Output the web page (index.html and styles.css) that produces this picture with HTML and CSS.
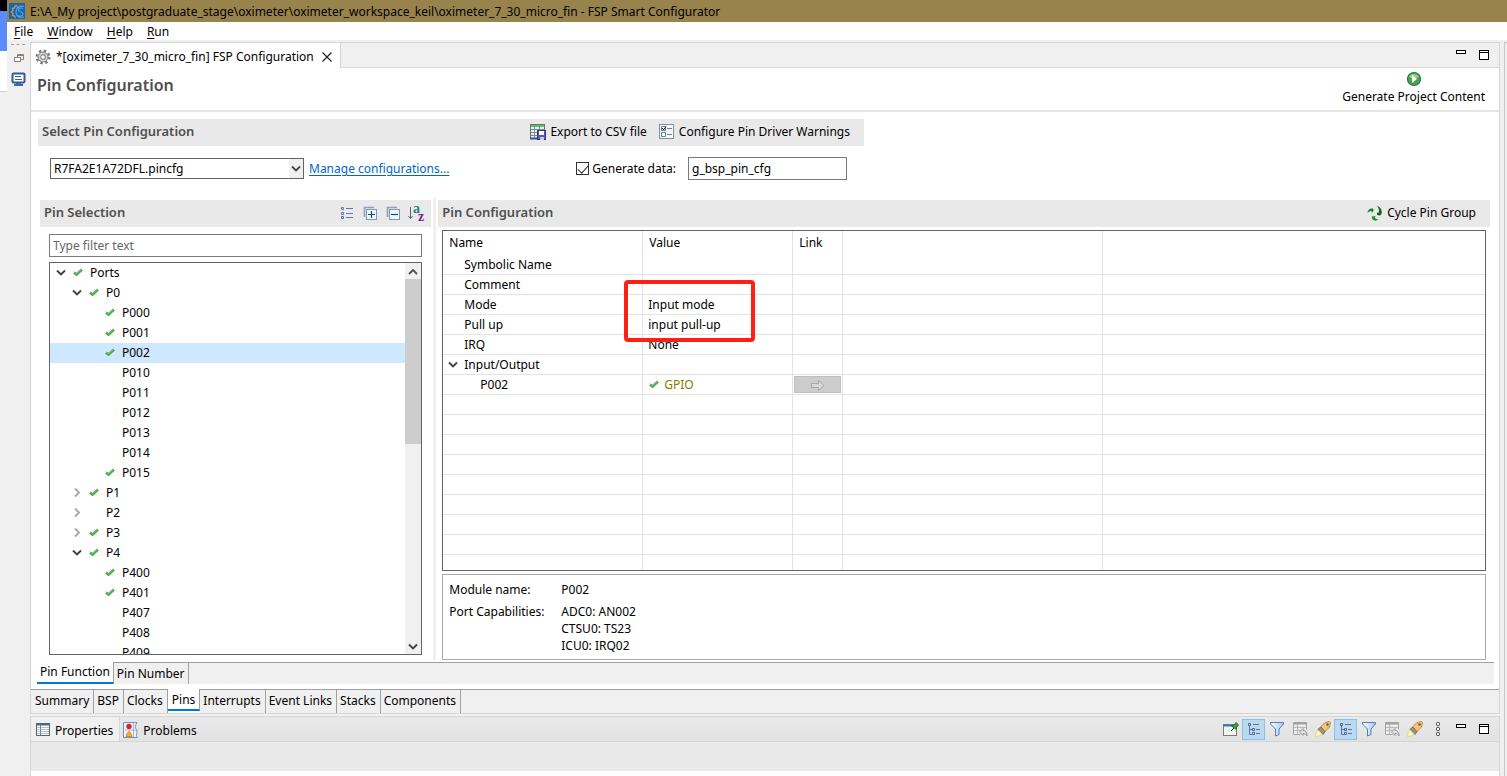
FILE: index.html
```html
<!DOCTYPE html>
<html lang="en">
<head>
  <meta charset="UTF-8">
  <meta name="viewport" content="width=device-width, initial-scale=1.0">
  <title>FSP Smart Configurator</title>
  <link rel="stylesheet" href="styles.css">
</head>
<body>
  <!-- Shared icons -->
  <svg class="sprite" aria-hidden="true">
    <linearGradient id="funnelFill" x1="0" y1="0" x2="1" y2="0">
      <stop offset="0" stop-color="#fff"/><stop offset="1" stop-color="#9cc8ee"/>
    </linearGradient>
    <symbol id="check" viewBox="0 0 16 16">
      <path d="M4 8.500 6.500 10.500 12 5.500" fill="none" stroke="#4a9e4c" stroke-width="2.600"/>
      <path d="M4.500 8.300 6.500 9.800 11.500 5.500" fill="none" stroke="#8bcf86" stroke-width="1"/>
    </symbol>
    <symbol id="open" viewBox="0 0 16 16">
      <path d="M4 6.500 8 10.500 12 6.500" fill="none" stroke="#404040" stroke-width="1.800"/>
    </symbol>
    <symbol id="closed" viewBox="0 0 16 16">
      <path d="M6 4.500 10 8.500 6 12.500" fill="none" stroke="#a6a6a6" stroke-width="1.800"/>
    </symbol>
    <symbol id="minimize" viewBox="0 0 16 16">
      <rect x="3.500" y="3.500" width="9" height="3" fill="#fff" stroke="#000"/>
    </symbol>
    <symbol id="maximize" viewBox="0 0 16 16">
      <rect x="3.500" y="3.500" width="9" height="9" fill="#fff" stroke="#000"/>
      <path d="M3 5.500h10" stroke="#000"/>
    </symbol>
    <symbol id="treeview" viewBox="0 0 16 16">
      <path d="M3.500 4v9.500h3M3.500 8.500h3" fill="none" stroke="#5b74a8"/>
      <rect x="2.500" y="2.500" width="2" height="2" fill="#dfe9f8" stroke="#5b74a8"/>
      <rect x="6.500" y="7.500" width="2" height="2" fill="#dfe9f8" stroke="#5b74a8"/>
      <rect x="6.500" y="11.500" width="2" height="2" fill="#dfe9f8" stroke="#5b74a8"/>
      <path d="M7 3.500h6M10 8.500h4M10 12.500h4" stroke="#5b74a8"/>
    </symbol>
    <symbol id="funnel" viewBox="0 0 16 16">
      <path d="M1.500 1.500h13v1.500L10 8v5.500L6.500 15V8L1.500 3z" fill="url(#funnelFill)" stroke="#5a7db4"/>
    </symbol>
    <symbol id="restoreTable" viewBox="0 0 16 16">
      <path d="M1.500 1.500h13v7M1.500 1.500v12h7" fill="#ececec" stroke="#a3a3a3"/>
      <path d="M1 2.500h14" stroke="#a3a3a3" stroke-width="2"/>
      <path d="M2 6.500h12M2 9.500h7M5.500 3v10" fill="none" stroke="#b9b9b9"/>
      <path d="M7.500 11 11 7.500V9.500c3 0 4 2 4 5.500-1-2-2-2.500-4-2.500v2z" fill="#e4e4e4" stroke="#999"/>
    </symbol>
    <symbol id="torch" viewBox="0 0 16 16">
      <path d="M10 1.500 14.500 .5 15.500 1.500 14.500 6 8.500 12 4 7.500z" fill="#f7c56f" stroke="#c98b2b"/>
      <circle cx="12.500" cy="3.500" r="1.200" fill="#2f5f9e"/>
      <path d="M6 6 10 10.500 8 13.500 3 8.500z" fill="#9a928d" stroke="#7b736e"/>
      <path d="M3 9 7 13 4 15 .5 15.500 1 12z" fill="#fff7c9" stroke="#eecb55" stroke-width=".7"/>
    </symbol>
  </svg>

  <div class="desktop">
    <div class="behind">
      <span class="behind-black"></span>
      <span class="behind-blue"></span>
      <span class="behind-white"></span>
    </div>

    <div class="window">
      <header class="titlebar">
        <svg class="app-icon" viewBox="0 0 16 16">
          <rect width="16" height="16" fill="#1667b1"/>
          <path d="M8 2.500 6 3 5.500 5 3.500 5.500 4 7.500 2.500 9 4 10.500 3.500 12.500 5.500 13 6.500 15" fill="none" stroke="#c9964d" stroke-width="1.300"/>
          <path d="M8 3.500 10 5" stroke="#c9964d" stroke-width="1.300"/>
          <path d="M14 5.500c-2-1-4.500-.5-4.500 1.500 0 2.500 4.500 1.500 4.500 4 0 2-3 2.500-5 1.500M15 3.500C10 2 7 5 7 9s3 6.500 8 5" fill="none" stroke="#4fa3e8" stroke-width="1.200"/>
        </svg>
        <span>E:\A_My project\postgraduate_stage\oximeter\oximeter_workspace_keil\oximeter_7_30_micro_fin - FSP Smart Configurator</span>
      </header>

      <nav class="menubar">
        <button><u>F</u>ile</button>
        <button><u>W</u>indow</button>
        <button><u>H</u>elp</button>
        <button><u>R</u>un</button>
      </nav>

      <div class="workbench">
        <aside class="trim">
          <span class="grip"></span>
          <button aria-label="Restore">
            <svg class="icon" viewBox="0 0 16 16">
              <path d="M7.500 7V4.500h6v5H11M7.500 5.500h6" fill="none" stroke="#8a8178"/>
              <rect x="4.500" y="7.500" width="6" height="4" fill="#fff" stroke="#8a8178"/>
            </svg>
          </button>
          <button aria-label="Console">
            <svg class="icon" viewBox="0 0 16 16">
              <rect x="2.500" y="2.500" width="12" height="9" rx="1" fill="#fff" stroke="#2f5a9c" stroke-width="2"/>
              <path d="M5 5.500h6M5 8.500h7" stroke="#4a5f86"/>
              <path d="M6 12h5v1h2v2H4v-2h2z" fill="#3a67a8"/>
            </svg>
          </button>
        </aside>

        <main class="main">
          <section class="editor">
            <div class="editor-tabs">
              <div class="editor-tab">
                <svg class="icon" viewBox="0 0 16 16">
                  <circle cx="8" cy="8" r="6.200" fill="none" stroke="#7d7d7d" stroke-width="2.500" stroke-dasharray="2.400 2.470"/>
                  <circle cx="8" cy="8" r="5" fill="#d3d3d3" stroke="#858585"/>
                  <circle cx="8" cy="8" r="2.300" fill="#fff" stroke="#8c8c8c" stroke-width="1.200"/>
                </svg>
                <span>*[oximeter_7_30_micro_fin] FSP Configuration</span>
                <button class="close" aria-label="Close">
                  <svg class="icon" viewBox="0 0 16 16"><path d="M3.500 3.500l9 9M12.500 3.500l-9 9" stroke="#222" stroke-width="1.200"/></svg>
                </button>
              </div>
              <div class="tools">
                <button aria-label="Minimize"><svg class="icon"><use href="#minimize"/></svg></button>
                <button aria-label="Maximize"><svg class="icon"><use href="#maximize"/></svg></button>
              </div>
            </div>

            <div class="form-head">
              <h1>Pin Configuration</h1>
              <button class="generate">
                <svg class="icon" viewBox="0 0 16 16">
                  <circle cx="8" cy="8" r="6.500" fill="#4ba254" stroke="#1f7a45" stroke-width="1.200"/>
                  <path d="M3 6c2-4 8-4 10 0-3 1-6 2-10 0z" fill="#9bd27f"/>
                  <path d="M6 4v8l5-4z" fill="#fff"/>
                </svg>
                Generate Project Content
              </button>
            </div>

            <section class="select-config">
              <div class="bar">
                <h2>Select Pin Configuration</h2>
                <button class="text-button">
                  <svg class="icon" viewBox="0 0 16 16">
                    <rect x=".5" y=".5" width="14" height="14" fill="#e9f3ea" stroke="#69717c"/>
                    <path d="M1 2h13" stroke="#4fd04a" stroke-width="2"/>
                    <path d="M1 5.500h13M1 8.500h13M1 11.500h13M4.500 1v13M9.500 1v13" stroke="#7d8b93"/>
                    <path d="M0 14.500h7" stroke="#2d56a5" stroke-width="2"/>
                    <rect x="7.500" y="6.500" width="8" height="9" fill="#5b57b8" stroke="#37348c"/>
                    <path d="M9 7h5v4H9z" fill="#fff"/><path d="M10 13h4v3h-4z" fill="#c9c8ea"/>
                  </svg>
                  Export to CSV file
                </button>
                <button class="text-button">
                  <svg class="icon" viewBox="0 0 16 16">
                    <rect x=".5" y=".5" width="14" height="14" fill="#f5f9fc" stroke="#7893a8"/>
                    <path d="M2.500 2.500h4v4h-4zM2.500 8.500h4v4h-4z" fill="#fff" stroke="#64809a"/>
                    <path d="M3 4l1.500 2L7 2.500" fill="none" stroke="#222"/>
                    <path d="M8 4.500h5M8 10.500h5" stroke="#64809a"/>
                  </svg>
                  Configure Pin Driver Warnings
                </button>
              </div>
              <div class="config-row">
                <div class="combo">
                  <select aria-label="Pin configuration"><option>R7FA2E1A72DFL.pincfg</option></select>
                  <svg class="combo-arrow" viewBox="0 0 14 19"><path d="M3 7.500 7 11.500 11 7.500" fill="none" stroke="#444" stroke-width="1.800"/></svg>
                </div>
                <a href="#">Manage configurations...</a>
                <div class="generate-data">
                  <input type="checkbox" id="genData" checked>
                  <label for="genData">Generate data:</label>
                  <input type="text" class="field" aria-label="Data name" value="g_bsp_pin_cfg">
                </div>
              </div>
            </section>

            <div class="panes">
              <section class="selection">
                <div class="bar">
                  <h2>Pin Selection</h2>
                  <div class="tools">
                    <button aria-label="List view">
                      <svg class="icon" viewBox="0 0 16 16">
                        <path d="M2.500 2.500h2v2h-2zM2.500 7.500h2v2h-2zM2.500 11.500h2v2h-2z" fill="#cfdcf2" stroke="#6179ae"/>
                        <path d="M7 3.500h7M7 8.500h7M7 12.500h7" stroke="#6179ae"/>
                      </svg>
                    </button>
                    <button aria-label="Expand all">
                      <svg class="icon" viewBox="0 0 16 16">
                        <path d="M2.500 12V2.500H12" fill="none" stroke="#8ba0c4" stroke-width="1.600"/>
                        <rect x="4.500" y="4.500" width="10" height="10" fill="#f2f9ff" stroke="#7e97bf"/>
                        <path d="M6 9.500h7M9.500 6v7" stroke="#0c4a7c" stroke-width="1.200"/>
                      </svg>
                    </button>
                    <button aria-label="Collapse all">
                      <svg class="icon" viewBox="0 0 16 16">
                        <path d="M2.500 12V2.500H12" fill="none" stroke="#8ba0c4" stroke-width="1.600"/>
                        <rect x="4.500" y="4.500" width="10" height="10" fill="#f2f9ff" stroke="#7e97bf"/>
                        <path d="M6 9.500h7" stroke="#0c4a7c" stroke-width="1.200"/>
                      </svg>
                    </button>
                    <button aria-label="Sort">
                      <svg class="icon sort" viewBox="0 0 16 16">
                        <path d="M2.500 2v11M.5 11l2 2.500L4.500 11" fill="none" stroke="#5c6670"/>
                        <text x="5" y="8" fill="#23877d">a</text>
                        <text x="10" y="16" fill="#7c2485">z</text>
                      </svg>
                    </button>
                  </div>
                </div>

                <div class="selection-body">
                  <input type="text" class="field" placeholder="Type filter text" aria-label="Type filter text">
                  <div class="tree-box">
                    <ul class="tree">
                      <li><svg class="icon"><use href="#open"/></svg><svg class="icon"><use href="#check"/></svg>Ports</li>
                      <li class="port"><svg class="icon"><use href="#open"/></svg><svg class="icon"><use href="#check"/></svg>P0</li>
                      <li class="pin"><svg class="icon"><use href="#check"/></svg>P000</li>
                      <li class="pin"><svg class="icon"><use href="#check"/></svg>P001</li>
                      <li class="pin selected"><svg class="icon"><use href="#check"/></svg>P002</li>
                      <li class="pin"><svg class="icon"></svg>P010</li>
                      <li class="pin"><svg class="icon"></svg>P011</li>
                      <li class="pin"><svg class="icon"></svg>P012</li>
                      <li class="pin"><svg class="icon"></svg>P013</li>
                      <li class="pin"><svg class="icon"></svg>P014</li>
                      <li class="pin"><svg class="icon"><use href="#check"/></svg>P015</li>
                      <li class="port"><svg class="icon"><use href="#closed"/></svg><svg class="icon"><use href="#check"/></svg>P1</li>
                      <li class="port"><svg class="icon"><use href="#closed"/></svg><svg class="icon"></svg>P2</li>
                      <li class="port"><svg class="icon"><use href="#closed"/></svg><svg class="icon"><use href="#check"/></svg>P3</li>
                      <li class="port"><svg class="icon"><use href="#open"/></svg><svg class="icon"><use href="#check"/></svg>P4</li>
                      <li class="pin"><svg class="icon"><use href="#check"/></svg>P400</li>
                      <li class="pin"><svg class="icon"><use href="#check"/></svg>P401</li>
                      <li class="pin"><svg class="icon"></svg>P407</li>
                      <li class="pin"><svg class="icon"></svg>P408</li>
                      <li class="pin"><svg class="icon"></svg>P409</li>
                    </ul>
                    <div class="scrollbar">
                      <svg class="icon" viewBox="0 0 16 16"><path d="M4 11 8 7 12 11" fill="none" stroke="#505050" stroke-width="1.800"/></svg>
                      <div class="track"><div class="thumb"></div></div>
                      <svg class="icon"><use href="#open"/></svg>
                    </div>
                  </div>
                </div>
              </section>

              <div class="sash"></div>

              <section class="details">
                <div class="bar">
                  <h2>Pin Configuration</h2>
                  <button class="text-button">
                    <svg class="icon" viewBox="0 0 16 16">
                      <path d="M.5 8C.5 5 3 3 6 3.500L6.500 5.500 5 8 4.500 6C3 6 2 6.500 .5 8z" fill="#1c7a24"/>
                      <path d="M10 1c4 1 5.500 5 4.500 8L13 10.500 10 10V7.500l1.500.5C12.500 6 12 3 10 1z" fill="#14651b"/>
                      <path d="M12 14.500c-2.500 1.500-5 1.500-6.500 0L4.500 11.500l4-.5-.500 1.500c1 1.500 2 2 4 2z" fill="#2b8f35"/>
                    </svg>
                    Cycle Pin Group
                  </button>
                </div>

                <div class="details-body">
                  <div class="table-box">
                    <table>
                      <thead>
                        <tr><th class="col-name">Name</th><th class="col-value">Value</th><th class="col-link">Link</th><th class="col-extra"></th><th></th></tr>
                      </thead>
                      <tbody>
                        <tr><td>Symbolic Name</td><td></td><td></td><td></td><td></td></tr>
                        <tr><td>Comment</td><td></td><td></td><td></td><td></td></tr>
                        <tr><td>Mode</td><td>Input mode</td><td></td><td></td><td></td></tr>
                        <tr><td>Pull up</td><td>input pull-up</td><td></td><td></td><td></td></tr>
                        <tr><td>IRQ</td><td>None</td><td></td><td></td><td></td></tr>
                        <tr><td class="group"><svg class="icon"><use href="#open"/></svg>Input/Output</td><td></td><td></td><td></td><td></td></tr>
                        <tr>
                          <td class="child">P002</td>
                          <td class="gpio"><svg class="icon"><use href="#check"/></svg>GPIO</td>
                          <td class="link-cell">
                            <button class="link-button" aria-label="Go to link" disabled>
                              <svg class="icon" viewBox="0 0 16 16"><path d="M1.500 6.500h7v-3L14 8.500l-5.500 5v-3h-7z" fill="#d8d8d8" stroke="#a9a9a9"/></svg>
                            </button>
                          </td>
                          <td></td><td></td>
                        </tr>
                        <tr><td></td><td></td><td></td><td></td><td></td></tr>
                        <tr><td></td><td></td><td></td><td></td><td></td></tr>
                        <tr><td></td><td></td><td></td><td></td><td></td></tr>
                        <tr><td></td><td></td><td></td><td></td><td></td></tr>
                        <tr><td></td><td></td><td></td><td></td><td></td></tr>
                        <tr><td></td><td></td><td></td><td></td><td></td></tr>
                        <tr><td></td><td></td><td></td><td></td><td></td></tr>
                        <tr><td></td><td></td><td></td><td></td><td></td></tr>
                        <tr><td></td><td></td><td></td><td></td><td></td></tr>
                      </tbody>
                    </table>
                    <div class="highlight"></div>
                  </div>

                  <dl class="module">
                    <dt>Module name:</dt>
                    <dd>P002</dd>
                    <dt>Port Capabilities:</dt>
                    <dd>ADC0: AN002<br>CTSU0: TS23<br>ICU0: IRQ02</dd>
                  </dl>
                </div>
              </section>
            </div>

            <nav class="page-tabs inner">
              <button class="active">Pin Function</button>
              <button>Pin Number</button>
            </nav>
            <nav class="page-tabs outer">
              <button>Summary</button>
              <button>BSP</button>
              <button>Clocks</button>
              <button class="active">Pins</button>
              <button>Interrupts</button>
              <button>Event Links</button>
              <button>Stacks</button>
              <button>Components</button>
            </nav>
          </section>

          <section class="view">
            <div class="view-tabs">
              <button class="view-tab active">
                <svg class="icon" viewBox="0 0 16 16">
                  <rect x="1.500" y="1.500" width="13" height="12" fill="#fff" stroke="#4f6787"/>
                  <path d="M1 2.500h14" stroke="#4f6787" stroke-width="2"/>
                  <path d="M2 5.500h12M2 7.500h12M2 9.500h12M2 11.500h12" stroke="#b9c4d3"/>
                  <path d="M5.500 3v10" stroke="#6f87a6"/>
                </svg>
                Properties
              </button>
              <button class="view-tab">
                <svg class="icon" viewBox="0 0 16 16">
                  <path d="M.5.5H14c-2 3-2 5-.5 7.500S12 13 14.500 15.500H.5z" fill="#eef3fb" stroke="#7d8fae"/>
                  <path d="M10.500 1v14M2 8h11" stroke="#a9b7cd"/>
                  <circle cx="6" cy="4.500" r="2.700" fill="#d8232e"/>
                  <path d="M6 9.500c2 1 2 3 3 5H3c1-2 1-4 3-5z" fill="#f2b12e" stroke="#d68a10"/>
                </svg>
                Problems
              </button>
              <div class="tools">
                <button aria-label="Pin view">
                  <svg class="icon" viewBox="0 0 16 16">
                    <rect x="0.500" y="3.500" width="13" height="11" fill="#eef6fb" stroke="#8a7a52"/>
                    <path d="M0 4.500h14" stroke="#3b78b5" stroke-width="2"/>
                    <path d="M8 10 11 7" stroke="#333"/>
                    <path d="M8.500 5 11 4 13 1.500 15.500 4 13.500 6.500v2z" fill="#3c9a48" stroke="#1f7030"/>
                  </svg>
                </button>
                <button class="on" aria-label="Show categories"><svg class="icon"><use href="#treeview"/></svg></button>
                <button aria-label="Filter"><svg class="icon"><use href="#funnel"/></svg></button>
                <button aria-label="Restore default"><svg class="icon"><use href="#restoreTable"/></svg></button>
                <button aria-label="Search"><svg class="icon"><use href="#torch"/></svg></button>
                <button class="on" aria-label="Show categories"><svg class="icon"><use href="#treeview"/></svg></button>
                <button aria-label="Filter"><svg class="icon"><use href="#funnel"/></svg></button>
                <button aria-label="Restore default"><svg class="icon"><use href="#restoreTable"/></svg></button>
                <button aria-label="Search"><svg class="icon"><use href="#torch"/></svg></button>
                <button aria-label="View menu">
                  <svg class="icon" viewBox="0 0 16 16">
                    <g fill="#fff" stroke="#555"><circle cx="8" cy="3" r="1.700"/><circle cx="8" cy="8" r="1.700"/><circle cx="8" cy="13" r="1.700"/></g>
                  </svg>
                </button>
                <button aria-label="Minimize"><svg class="icon"><use href="#minimize"/></svg></button>
                <button aria-label="Maximize"><svg class="icon"><use href="#maximize"/></svg></button>
              </div>
            </div>
            <div class="view-head"></div>
          </section>
        </main>

        <div class="gutter"></div>
      </div>
    </div>
  </div>
</body>
</html>
```
FILE: styles.css
```css
* {
  box-sizing: border-box;
}

body {
  margin: 0;
  font-family: "Noto Sans", "Open Sans", sans-serif;
  font-size: 12px;
  line-height: 17px;
  color: #000;
  background: #f0f0f0;
}

button {
  padding: 0;
  border: none;
  background: none;
  font: inherit;
  color: inherit;
}

input, select {
  font: inherit;
  color: inherit;
}

h1, h2 {
  margin: 0;
  font-weight: 600;
  color: #4f4f4f;
}

h1 {
  font-size: 16px;
}

h2 {
  font-size: 13px;
  margin-right: auto;
}

.sprite {
  position: absolute;
  width: 0;
  height: 0;
}

.icon {
  display: block;
  flex: none;
  width: 16px;
  height: 16px;
}

/* Window frame */
.desktop {
  display: flex;
  height: 100vh;
  overflow: hidden;
}

.behind {
  display: flex;
  flex-direction: column;
  width: 7px;
}

.behind-black {
  height: 11px;
  background: #000;
}

.behind-blue {
  height: 40px;
  background: #5a8cff;
}

.behind-white {
  height: 41px;
  background: #fff;
  border-bottom: 1px solid #d0d0d0;
}

.window {
  flex: 1;
  min-width: 0;
  display: flex;
  flex-direction: column;
}

.titlebar {
  display: flex;
  align-items: center;
  gap: 5px;
  height: 22px;
  padding-left: 2px;
  background: #98834d;
  white-space: nowrap;
}

.app-icon {
  width: 16px;
  height: 16px;
}

.menubar {
  display: flex;
  gap: 14px;
  height: 18px;
  padding-left: 7px;
  background: #fff;
}

.menubar u {
  text-underline-offset: 2px;
}

.workbench {
  flex: 1;
  min-height: 0;
  display: flex;
  padding-top: 2px;
}

.trim {
  display: flex;
  flex-direction: column;
  align-items: center;
  gap: 5px;
  width: 23px;
  padding: 2px 2px 0 0;
}

.grip {
  width: 14px;
  border-top: 1px dashed #a79f98;
}

.gutter {
  width: 3px;
  margin-left: 4px;
  border-left: 1px solid #c6c6c6;
  border-top: 1px solid #c6c6c6;
}

.main {
  flex: 1;
  min-width: 0;
  display: flex;
  flex-direction: column;
  gap: 2px;
}

/* Editor */
.editor {
  flex: 1;
  min-height: 0;
  display: flex;
  flex-direction: column;
  border: 1px solid #d6d6d6;
  background: #fff;
}

.editor-tabs {
  display: flex;
  height: 25px;
}

.editor-tab {
  display: flex;
  align-items: center;
  gap: 5px;
  padding: 2px 5px 0 4px;
  border-right: 1px solid #d6d6d6;
}

.tools {
  display: flex;
  align-items: center;
}

.tools button {
  display: flex;
  align-items: center;
  justify-content: center;
  width: 23px;
  height: 21px;
}

.tools .on {
  background: #bcd9f0;
  border: 1px solid #88bfec;
}

.editor-tabs .tools {
  flex: 1;
  justify-content: flex-end;
  padding-right: 4px;
  background: #f0f0f0;
  border-bottom: 1px solid #d6d6d6;
}

.form-head {
  display: flex;
  justify-content: space-between;
  height: 44px;
  padding: 3px 14px 0 6px;
  border-bottom: 2px solid #e6e6e6;
}

.form-head h1 {
  line-height: 28px;
}

.generate {
  display: flex;
  flex-direction: column;
  align-items: center;
  gap: 1px;
}

.bar {
  display: flex;
  align-items: center;
  height: 27px;
  padding: 0 4px 2px;
  background: #e9e9e9;
}

.text-button {
  display: flex;
  align-items: center;
  gap: 4px;
  margin-right: 12px;
}

.bar .text-button:last-child {
  margin-right: 10px;
}

.select-config {
  max-width: 833px;
  padding: 7px 0 0 7px;
}

.config-row {
  display: flex;
  align-items: center;
  gap: 5px;
  padding: 11px 17px 18px 12px;
}

.config-row a {
  color: #0066cc;
  text-underline-offset: 2px;
}

.combo {
  position: relative;
}

.combo select {
  display: block;
  width: 254px;
  height: 21px;
  padding: 0 3px;
  border: 1px solid #646464;
  border-radius: 0;
  background: #fff;
  appearance: none;
}

.combo-arrow {
  position: absolute;
  top: 1px;
  right: 1px;
  width: 14px;
  height: 19px;
  background: #f0f0f0;
  pointer-events: none;
}

.field {
  height: 23px;
  padding: 0 3px;
  border: 1px solid #7a7a7a;
  background: #fff;
}

.field::placeholder {
  color: #666;
}

.generate-data {
  display: flex;
  align-items: center;
  margin-left: auto;
}

.generate-data input[type=checkbox] {
  appearance: none;
  display: flex;
  justify-content: center;
  width: 13px;
  height: 13px;
  margin: 0 3px 0 0;
  border: 1px solid #333;
}

.generate-data input[type=checkbox]:checked::after {
  content: "";
  width: 5px;
  height: 9px;
  border: solid #333;
  border-width: 0 1px 1px 0;
  transform: rotate(42deg);
}

.generate-data .field {
  width: 159px;
  margin-left: 12px;
}

/* Pin selection tree and pin table */
.panes {
  flex: 1;
  min-height: 0;
  display: grid;
  grid-template-columns: minmax(0, 402fr) 3px minmax(0, 1062fr);
  grid-template-rows: minmax(0, 1fr);
}

.selection, .details {
  display: flex;
  flex-direction: column;
  min-height: 0;
  padding-top: 2px;
}

.selection {
  padding-left: 9px;
  padding-right: 2px;
}

.details {
  padding-left: 2px;
  padding-right: 9px;
}

.sash {
  background: #f0f0f0;
}

.selection-body {
  flex: 1;
  min-height: 0;
  display: flex;
  flex-direction: column;
  gap: 5px;
  padding: 7px 9px 5px 9px;
}

.tree-box {
  flex: 1;
  min-height: 0;
  display: flex;
  border: 1px solid #646464;
}

.tree {
  flex: 1;
  margin: 0;
  padding: 0;
  overflow: hidden;
  list-style: none;
}

.tree li {
  display: flex;
  align-items: center;
  height: 20px;
  padding-left: 3px;
  padding-bottom: 2px;
}

.tree li .icon:last-of-type {
  margin-left: 1px;
  margin-right: 4px;
}

.tree .port {
  padding-left: 19px;
}

.tree .pin {
  padding-left: 51px;
}

.tree .selected {
  background: #cde8ff;
}

.scrollbar {
  display: flex;
  flex-direction: column;
  align-items: center;
  width: 16px;
  background: #f0f0f0;
}

.track {
  flex: 1;
  width: 100%;
}

.thumb {
  height: 46%;
  background: #cdcdcd;
}

.details-body {
  flex: 1;
  min-height: 0;
  display: flex;
  flex-direction: column;
  gap: 3px;
  padding: 3px 4px 0;
}

.table-box {
  position: relative;
  flex: 1;
  min-height: 0;
  overflow: hidden;
  border: 1px solid #646464;
}

table {
  width: 100%;
  table-layout: fixed;
  border-spacing: 0;
}

th, td {
  height: 20px;
  padding: 0 5px;
  border-right: 1px solid #e3e3e3;
  border-bottom: 1px solid #e3e3e3;
  text-align: left;
  font-weight: 400;
}

th {
  height: 24px;
  padding: 0 6px 2px;
  border-bottom: none;
}

th:last-child, td:last-child {
  border-right: none;
}

.col-name {
  width: 200px;
}

.col-value {
  width: 150px;
}

.col-link {
  width: 50px;
}

.col-extra {
  width: 260px;
}

td:first-child {
  padding-left: 21px;
}

td .icon {
  display: inline-block;
  vertical-align: top;
}

td.group {
  padding-left: 2px;
}

td.group .icon {
  margin-right: 3px;
}

td.child {
  padding-left: 37px;
}

td.gpio {
  padding-left: 3px;
  color: #808000;
}

td.gpio .icon {
  margin-right: 2px;
}

td.link-cell {
  padding: 1px;
}

.link-button {
  display: flex;
  align-items: center;
  justify-content: center;
  width: 100%;
  height: 17px;
  background: #ccc;
  border: 1px solid #bfbfbf;
}

/* Red frame over the mode and pull-up values */
.highlight {
  position: absolute;
  top: 49px;
  left: 181px;
  width: 131px;
  height: 62px;
  border: 4px solid #ff2013;
  border-radius: 4px;
}

.module {
  display: grid;
  grid-template-columns: 112px 1fr;
  row-gap: 5px;
  margin: 0;
  padding: 6px 6px 5px;
  border: 1px solid #a9a9a9;
}

.module dd {
  margin: 0;
}

/* Page tabs at the bottom of the editor */
.page-tabs {
  display: flex;
}

.page-tabs button {
  padding: 0 4px 2px 3px;
  border-top: 1px solid #a0a0a0;
  border-right: 1px solid #a0a0a0;
  background: #f0f0f0;
}

.page-tabs::after {
  content: "";
  flex: 1;
  border-top: 1px solid #a0a0a0;
  background: #f0f0f0;
}

.page-tabs .active {
  border-top: none;
  border-bottom: 2px solid #0078d7;
  background: #fff;
}

.inner {
  height: 22px;
  margin: 2px 5px 5px 6px;
}

.inner button {
  padding: 0 3px 1px;
}

.outer {
  height: 24px;
}

.outer button:first-child {
  padding-left: 4px;
}

.outer .active {
  height: 22px;
  padding: 0 4px;
}

/* Properties view */
.view {
  height: 60px;
  border: solid #d6d6d6;
  border-width: 1px 1px 0;
  background: #fff;
}

.view-tabs {
  display: flex;
  height: 25px;
  border-bottom: 1px solid #d6d6d6;
  background: linear-gradient(#e9e9e9, #e2e2e2);
}

.view-tab {
  display: flex;
  align-items: center;
  gap: 4px;
  padding: 2px 6px 0 3px;
}

.view-tab.active {
  padding-left: 4px;
  border-right: 1px solid #d6d6d6;
  background: #f0f0f0;
}

.view-tabs .tools {
  margin-left: auto;
  padding-right: 4px;
}

.view-head {
  height: 29px;
  background: #e9e9e9;
}

.sort {
  overflow: visible;
  font-family: "Liberation Serif", serif;
  font-size: 14px;
  font-weight: bold;
}
```
